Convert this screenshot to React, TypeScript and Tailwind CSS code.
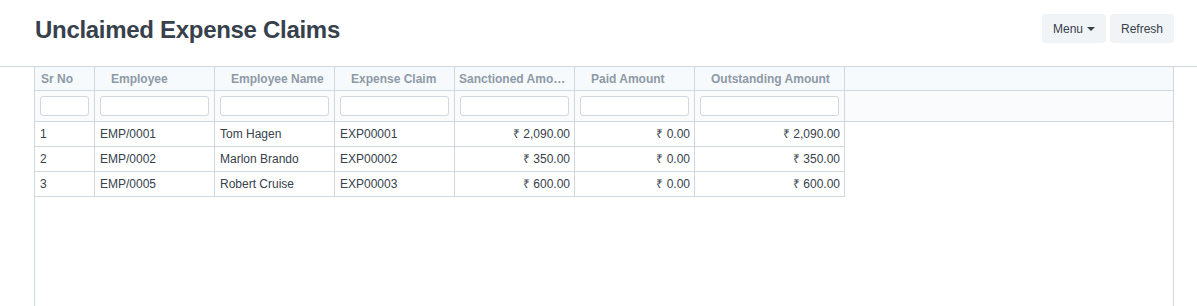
const COLUMNS = [
  { label: 'Sr No', width: 'w-[60px]', head: 'pl-[6px]', align: 'text-left' },
  { label: 'Employee', width: 'w-[120px]', head: 'pl-[16px]', align: 'text-left' },
  { label: 'Employee Name', width: 'w-[120px]', head: 'pl-[16px]', align: 'text-left' },
  { label: 'Expense Claim', width: 'w-[120px]', head: 'pl-[16px]', align: 'text-left' },
  { label: 'Sanctioned Amount', width: 'w-[120px]', head: 'pl-[4px] pr-[4px]', align: 'text-right' },
  { label: 'Paid Amount', width: 'w-[120px]', head: 'pl-[16px]', align: 'text-right' },
  { label: 'Outstanding Amount', width: 'w-[150px]', head: 'pl-[16px]', align: 'text-right' },
];

const ROWS = [
  ['1', 'EMP/0001', 'Tom Hagen', 'EXP00001', '₹ 2,090.00', '₹ 0.00', '₹ 2,090.00'],
  ['2', 'EMP/0002', 'Marlon Brando', 'EXP00002', '₹ 350.00', '₹ 0.00', '₹ 350.00'],
  ['3', 'EMP/0005', 'Robert Cruise', 'EXP00003', '₹ 600.00', '₹ 0.00', '₹ 600.00'],
];

export default function App() {
  return (
    <div className="h-[306px] overflow-hidden bg-white text-[#36414c] font-['Liberation_Sans',Helvetica,Arial,sans-serif]">
      <div className="h-[66px] flex items-start justify-between pl-[35px] pr-[23px]">
        <h1 className="mt-[18px] text-[24px] font-bold leading-none tracking-[-0.3px]">Unclaimed Expense Claims</h1>
        <div className="mt-[14px] flex gap-[4px]">
          <button className="h-[29px] w-[64px] rounded-[4px] bg-[#f0f4f7] text-[12px] flex items-center justify-center gap-[4px]">
            Menu
            <span className="w-0 h-0 border-l-[4px] border-r-[4px] border-t-[4px] border-l-transparent border-r-transparent border-t-[#36414c]" />
          </button>
          <button className="h-[29px] w-[64px] rounded-[4px] bg-[#f0f4f7] text-[12px]">Refresh</button>
        </div>
      </div>

      <div className="border-t border-[#d1d8dd]">
        <div className="ml-[34px] mr-[23px] h-[240px] border-l border-r border-[#d1d8dd] text-[12px]">
          <div className="flex h-[24px] bg-[#f7fafc] border-b border-[#d1d8dd]">
            {COLUMNS.map((col) => (
              <div
                key={col.label}
                className={`${col.width} ${col.head} shrink-0 border-r border-[#d1d8dd] flex items-center font-bold text-[#8d99a6] overflow-hidden`}
              >
                <span className="truncate">{col.label}</span>
              </div>
            ))}
          </div>
          <div className="flex h-[31px] bg-[#fafbfc] border-b border-[#d1d8dd]">
            {COLUMNS.map((col) => (
              <div key={col.label} className={`${col.width} shrink-0 border-r border-[#d1d8dd] px-[5px] flex items-center`}>
                <input className="w-full h-[20px] bg-white border border-[#d1d8dd] rounded-[3px] outline-none" />
              </div>
            ))}
          </div>
          {ROWS.map((row, r) => (
            <div key={r} className="flex h-[25px] w-fit border-b border-[#d1d8dd]">
              {row.map((cell, c) => (
                <div
                  key={c}
                  className={`${COLUMNS[c].width} ${COLUMNS[c].align} shrink-0 border-r border-[#d1d8dd] pl-[5px] pr-[4px] leading-[24px] text-[#36414c]`}
                >
                  {cell}
                </div>
              ))}
            </div>
          ))}
        </div>
      </div>
    </div>
  );
}
